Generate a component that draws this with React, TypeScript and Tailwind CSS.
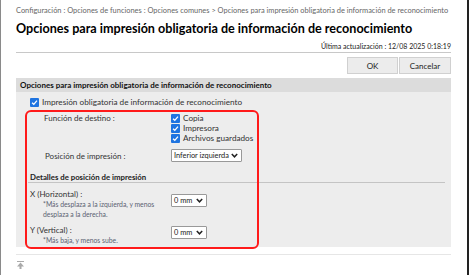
import React from 'react';

const font = { fontFamily: 'Lato, "Noto Sans", sans-serif' };

function Check({ label }: { label: string }) {
  return (
    <div className="flex items-center gap-[3px] h-[10px]">
      <span className="w-[9px] h-[9px] rounded-[1px] bg-[#1f74e0] flex items-center justify-center shrink-0">
        <svg width="7" height="7" viewBox="0 0 8 8">
          <path d="M1.2 4.2 L3.2 6.1 L6.8 1.8" fill="none" stroke="#fff" strokeWidth="1.5" />
        </svg>
      </span>
      <span className="text-[8.2px] text-[#333] leading-none whitespace-nowrap">{label}</span>
    </div>
  );
}

function Select({ value, width }: { value: string; width: string }) {
  return (
    <div className={`${width} h-[13px] bg-white border border-[#999] rounded-[1px] flex items-center justify-between pl-[2px] pr-[3px] shrink-0`}>
      <span className="text-[7.4px] text-[#222] leading-none whitespace-nowrap">{value}</span>
      <svg width="7" height="5" viewBox="0 0 7 5">
        <path d="M0.8 1 L3.5 3.8 L6.2 1" fill="none" stroke="#222" strokeWidth="1.5" />
      </svg>
    </div>
  );
}

export default function App() {
  return (
    <div style={font} className="w-[469px] h-[275px] bg-white overflow-hidden border-l border-l-[#8a8a8a] border-r-2 border-r-[#222]">
      <div className="pl-[15px] pr-[16px] pt-[6px]">
        <div className="h-[10px] text-[7.45px] text-[#666] leading-[10px] whitespace-nowrap">
          Configuración : Opciones de funciones : Opciones comunes &gt; Opciones para impresión obligatoria de información de reconocimiento
        </div>
        <h1 className="mt-[5px] h-[16px] text-[12.6px] font-bold text-black leading-[16px] whitespace-nowrap">
          Opciones para impresión obligatoria de información de reconocimiento
        </h1>
        <div className="mt-[4px] h-[10px] text-right text-[7px] text-[#222] leading-[10px] whitespace-nowrap">
          Última actualización : 12/08 2025 0:18:19
        </div>
        <div className="mt-[1px] border-t border-[#c8c8c8]" />
        <div className="flex justify-end gap-[1px] mt-[4px]">
          <button className="w-[51px] h-[17px] bg-[#ececec] border border-[#d0d0d0] text-[8px] text-[#222]">OK</button>
          <button className="w-[52px] h-[17px] bg-[#ececec] border border-[#d0d0d0] text-[8px] text-[#222]">Cancelar</button>
        </div>
        <div className="relative mt-[4px] bg-[#ededed] h-[169px]">
          <div className="h-[14px] bg-[#dcdcdc] flex items-center pl-[4px]">
            <span className="text-[8px] font-bold text-[#111] leading-none whitespace-nowrap">Opciones para impresión obligatoria de información de reconocimiento</span>
          </div>
          <div className="pl-[14px] mt-[5px]">
            <Check label="Impresión obligatoria de información de reconocimiento" />
          </div>
          <div className="flex pl-[28px] mt-[6px]">
            <div className="w-[127px] h-[10px] text-[8px] text-[#333] leading-[10px]">Función de destino :</div>
            <div className="flex flex-col">
              <Check label="Copia" />
              <Check label="Impresora" />
              <Check label="Archivos guardados" />
            </div>
          </div>
          <div className="flex items-center pl-[29px] mt-[6px]">
            <div className="w-[126px] text-[8px] text-[#333] leading-none">Posición de impresión :</div>
            <Select value="Inferior izquierda" width="w-[71px]" />
          </div>
          <div className="ml-[12px] mr-[6px] mt-[10px] h-[11px] border-b border-[#c4c4c4] pl-[2px] text-[7.8px] font-bold text-[#222] leading-[10px] whitespace-nowrap">
            Detalles de posición de impresión
          </div>
          <div className="flex pl-[14px] mt-[6px]">
            <div className="w-[141px]">
              <div className="h-[10px] text-[8px] text-[#333] leading-[10px]">X (Horizontal) :</div>
              <div className="pl-[13px] text-[6.8px] text-[#5b6272] leading-[10px]">
                <div>*Más desplaza a la izquierda, y menos</div>
                <div>desplaza a la derecha.</div>
              </div>
            </div>
            <div className="mt-[5px]">
              <Select value="0 mm" width="w-[36px]" />
            </div>
          </div>
          <div className="flex pl-[14px] mt-[6px]">
            <div className="w-[141px]">
              <div className="h-[10px] text-[8px] text-[#333] leading-[10px]">Y (Vertical) :</div>
              <div className="pl-[13px] text-[6.8px] text-[#5b6272] leading-[10px]">*Más baja, y menos sube.</div>
            </div>
            <div className="mt-[1px]">
              <Select value="0 mm" width="w-[36px]" />
            </div>
          </div>
          <div className="absolute left-[9px] top-[32px] w-[234px] h-[139px] border-2 border-[#ff1a1a] rounded-[6px] pointer-events-none" />
        </div>
        <div className="mt-[7px] border-t border-[#e6e6e6]" />
        <div className="mt-[6px] pl-[1px]">
          <svg width="7" height="8" viewBox="0 0 7 8">
            <rect x="0" y="0" width="7" height="1" fill="#aaa" />
            <path d="M3.5 1.5 L7 5.5 L4.5 5.5 L4.5 8 L2.5 8 L2.5 5.5 L0 5.5 Z" fill="#aaa" />
          </svg>
        </div>
      </div>
    </div>
  );
}
